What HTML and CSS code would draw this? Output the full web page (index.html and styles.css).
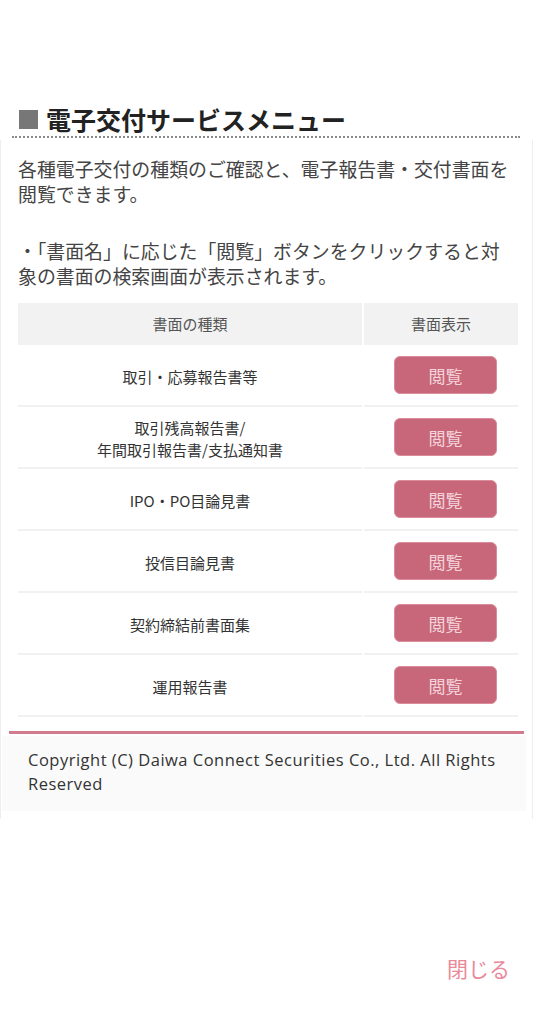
FILE: index.html
```html
<!DOCTYPE html>
<html lang="ja">
<head>
    <meta charset="UTF-8">
    <meta name="viewport" content="width=device-width, initial-scale=1.0">
    <title>電子交付サービスメニュー</title>
    <link rel="stylesheet" href="styles.css">
</head>
<body>
    <div class="page">
        <h2 class="menu-title"><span class="title-mark"></span>電子交付サービスメニュー</h2>

        <div class="panel">
            <div class="lead">
                <p>各種電子交付の種類のご確認と、電子報告書・交付書面を閲覧できます。</p>
                <p>・「書面名」に応じた「閲覧」ボタンをクリックすると対象の書面の検索画面が表示されます。</p>
            </div>

            <div class="doc-table">
                <div class="cell head">書面の種類</div>
                <div class="cell head">書面表示</div>

                <div class="cell name">取引・応募報告書等</div>
                <div class="cell action"><button class="view-btn">閲覧</button></div>

                <div class="cell name">取引残高報告書/<br>年間取引報告書/支払通知書</div>
                <div class="cell action"><button class="view-btn">閲覧</button></div>

                <div class="cell name">IPO・PO目論見書</div>
                <div class="cell action"><button class="view-btn">閲覧</button></div>

                <div class="cell name">投信目論見書</div>
                <div class="cell action"><button class="view-btn">閲覧</button></div>

                <div class="cell name">契約締結前書面集</div>
                <div class="cell action"><button class="view-btn">閲覧</button></div>

                <div class="cell name">運用報告書</div>
                <div class="cell action"><button class="view-btn">閲覧</button></div>
            </div>

            <div class="footer-rule"></div>
            <div class="footer">Copyright (C) Daiwa Connect Securities Co., Ltd. All Rights Reserved</div>
        </div>

        <div class="close-row">
            <a class="close-link">閉じる</a>
        </div>
    </div>
</body>
</html>
```

FILE: styles.css
```css
body {
    margin: 0;
    background: #fff;
    font-family: "Noto Sans CJK JP", "Noto Sans", sans-serif;
    color: #333;
}

.page {
    width: 533px;
    padding-top: 104px;
}

.menu-title {
    display: flex;
    align-items: center;
    gap: 8px;
    margin: 0 13px 0 12px;
    padding: 0 0 2px 7px;
    font-size: 25px;
    line-height: 30px;
    font-weight: bold;
    color: #222;
    border-bottom: 2px dotted #8a8a8a;
}

.title-mark {
    width: 19px;
    height: 19px;
    background: #777;
}

.panel {
    margin-top: 2px;
    border-left: 1px solid #eee;
    border-right: 1px solid #eee;
    padding-bottom: 8px;
}

.lead {
    padding: 16px 15px 0 17px;
    font-size: 18.9px;
    line-height: 25px;
    color: #444;
}

.lead p {
    margin: 0 0 32px;
}

.lead p:last-child {
    margin-bottom: 15px;
}

.doc-table {
    display: grid;
    grid-template-columns: 344px 1fr;
    column-gap: 2px;
    margin: 0 14px 0 17px;
}

.cell {
    display: flex;
    align-items: center;
    justify-content: center;
    text-align: center;
    font-size: 15px;
    line-height: 22px;
    color: #333;
}

.cell.head {
    height: 42px;
    background: #f2f2f2;
    color: #555;
}

.cell.name,
.cell.action {
    height: 60px;
    border-bottom: 2px solid #f1f1f1;
}

.cell.name {
    padding-top: 4px;
    box-sizing: border-box;
    height: 62px;
}

.cell.action {
    justify-content: flex-start;
    padding-left: 30px;
}

.view-btn {
    width: 103px;
    height: 38px;
    border: 1px solid #d98c9b;
    border-radius: 6px;
    background: #c8677a;
    color: #f3d3da;
    font-family: inherit;
    font-size: 17px;
    cursor: pointer;
}

.footer-rule {
    margin: 14px 8px 0 8px;
    height: 3px;
    background: #d27b8c;
}

.footer {
    margin: 2px 6px 0 1px;
    padding: 12px 20px 15px 26px;
    background: #fafafa;
    font-family: "Open Sans", "Noto Sans CJK JP", sans-serif;
    font-size: 16.5px;
    line-height: 24px;
    letter-spacing: 0.5px;
    color: #333;
}

.close-row {
    display: flex;
    justify-content: flex-end;
    padding: 134px 23px 0 0;
}

.close-link {
    font-size: 21px;
    color: #e98a9b;
    cursor: pointer;
}
```
